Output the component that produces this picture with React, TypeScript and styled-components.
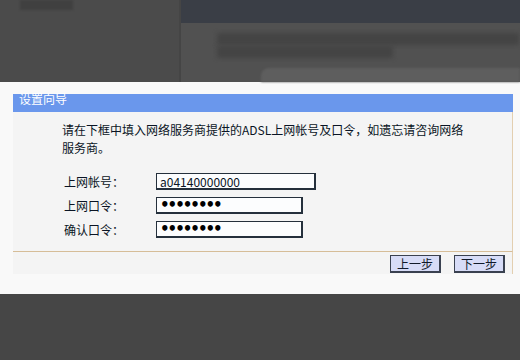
import React from "react";
import styled, { createGlobalStyle } from "styled-components";

const GlobalStyle = createGlobalStyle`
  html, body {
    margin: 0;
    padding: 0;
    background: #464646;
  }
  body {
    font-family: "Noto Sans CJK SC", "DejaVu Sans", sans-serif;
  }
`;

const Screen = styled.div`
  width: 520px;
  height: 360px;
  display: flex;
  flex-direction: column;
  overflow: hidden;
`;

/* blurred page behind the dialog */
const Backdrop = styled.div`
  height: 82px;
  display: flex;
  background: #4b4b4b;
`;

const BackLeft = styled.div`
  width: 181px;
  padding-left: 20px;
  box-sizing: border-box;
  border-right: 2px solid #454545;
`;

const BackTab = styled.div`
  width: 53px;
  height: 10px;
  background: #404040;
  filter: blur(1px);
`;

const BackRight = styled.div`
  flex: 1;
  display: flex;
  flex-direction: column;
`;

const BackBar = styled.div`
  height: 23px;
  background: #3a3e46;
`;

const BackContent = styled.div`
  flex: 1;
  background: #515151;
  padding: 10px 0 0 36px;
  display: flex;
  flex-direction: column;
  gap: 1px;
`;

const BlurLine = styled.div<{ $w: number }>`
  width: ${(p) => p.$w}px;
  height: 12px;
  background: #444444;
  filter: blur(2px);
`;

const BackField = styled.div`
  margin: 9px 0 0 44px;
  flex: 1;
  background: #5e5e5e;
  border-radius: 8px 0 0 0;
  filter: blur(1px);
`;

const Sheet = styled.div`
  height: 212px;
  background: #f9f9f9;
  padding: 12px 7px 0 13px;
  box-sizing: border-box;
`;

const Panel = styled.div`
  display: flex;
  flex-direction: column;
`;

const Header = styled.div`
  height: 18px;
  background: #6a97ec;
  color: #ffffff;
  font-size: 12px;
  line-height: 12px;
  padding-left: 6px;
`;

const HeaderText = styled.span`
  position: relative;
  top: -1px;
`;

const Body = styled.div`
  height: 140px;
  background: #f4f4f4;
  border-right: 1px solid #e3cfb0;
  border-bottom: 1px solid #d6bd98;
  padding: 9px 0 0 49px;
  box-sizing: border-box;
`;

const Intro = styled.p`
  margin: 0;
  width: 404px;
  font-size: 12px;
  line-height: 18px;
  color: #0a1424;
`;

const Form = styled.div`
  margin-top: 16px;
  display: flex;
  flex-direction: column;
  gap: 7px;
`;

const Row = styled.div`
  display: flex;
  align-items: center;
  height: 17px;
`;

const Label = styled.label`
  width: 94px;
  padding-left: 2px;
  box-sizing: border-box;
  font-size: 12px;
  color: #0a1424;
`;

const Field = styled.input<{ $w: number }>`
  width: ${(p) => p.$w}px;
  height: 17px;
  box-sizing: border-box;
  margin: 0;
  padding: 0 3px;
  border: 1px solid #25303c;
  border-right-width: 2px;
  border-bottom-width: 2px;
  background: #fcfdfe;
  color: #0a1424;
  font-family: "Noto Sans CJK SC", "DejaVu Sans", sans-serif;
  font-size: 12px;
  outline: none;

  &[type="password"] {
    font-family: "DejaVu Sans", sans-serif;
    font-size: 15px;
    letter-spacing: -2px;
    font-weight: bold;
    color: #000000;
  }
`;

const Footer = styled.div`
  height: 22px;
  background: #f4f4f4;
  border-right: 1px solid #e3cfb0;
  display: flex;
  justify-content: flex-end;
  align-items: flex-start;
  gap: 13px;
  padding: 3px 7px 0 0;
  box-sizing: border-box;
`;

const Button = styled.button`
  width: 51px;
  height: 18px;
  margin: 0;
  padding: 0;
  background: #d7dcf7;
  border: 1px solid #3a4150;
  border-right-width: 2px;
  border-bottom-width: 2px;
  color: #111a2a;
  font-family: "Noto Sans CJK SC", sans-serif;
  font-size: 12px;
  line-height: 14px;
  cursor: pointer;
`;

const Floor = styled.div`
  flex: 1;
  background: #464646;
`;

export default function App() {
  return (
    <>
      <GlobalStyle />
      <Screen>
        <Backdrop>
          <BackLeft>
            <BackTab />
          </BackLeft>
          <BackRight>
            <BackBar />
            <BackContent>
              <BlurLine $w={302} />
              <BlurLine $w={176} />
              <BackField />
            </BackContent>
          </BackRight>
        </Backdrop>
        <Sheet>
          <Panel>
            <Header>
              <HeaderText>设置向导</HeaderText>
            </Header>
            <Body>
              <Intro>
                请在下框中填入网络服务商提供的ADSL上网帐号及口令，如遗忘请咨询网络服务商。
              </Intro>
              <Form>
                <Row>
                  <Label>上网帐号：</Label>
                  <Field $w={160} type="text" defaultValue="a04140000000" />
                </Row>
                <Row>
                  <Label>上网口令：</Label>
                  <Field $w={147} type="password" defaultValue="12345678" />
                </Row>
                <Row>
                  <Label>确认口令：</Label>
                  <Field $w={147} type="password" defaultValue="12345678" />
                </Row>
              </Form>
            </Body>
            <Footer>
              <Button>上一步</Button>
              <Button>下一步</Button>
            </Footer>
          </Panel>
        </Sheet>
        <Floor />
      </Screen>
    </>
  );
}
